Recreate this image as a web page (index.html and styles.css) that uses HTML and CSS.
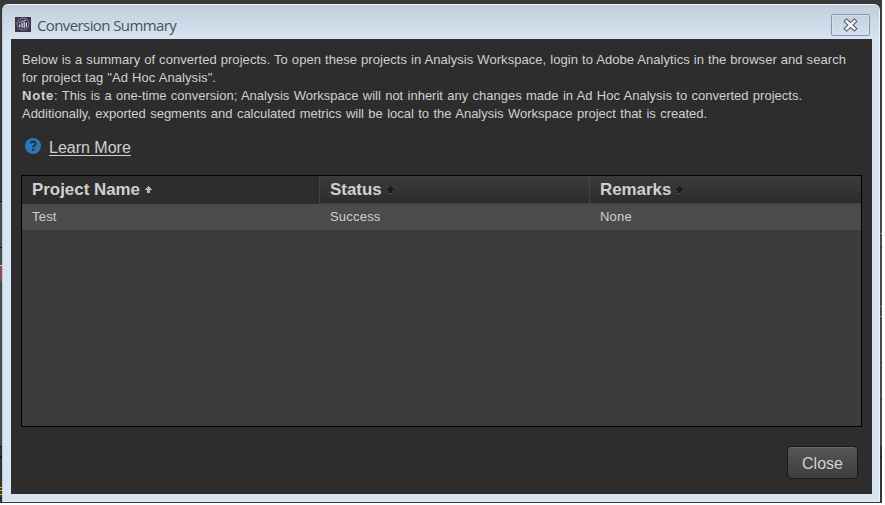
FILE: index.html
```html
<!DOCTYPE html>
<html lang="en">
<head>
<meta charset="utf-8">
<title>Conversion Summary</title>
<link rel="stylesheet" href="styles.css">
</head>
<body>
<div class="desktop">
  <i class="fleck l1"></i><i class="fleck l2"></i><i class="fleck l3"></i><i class="fleck l4"></i><i class="fleck l5"></i><i class="fleck gold g1"></i><i class="fleck gold g2"></i><i class="fleck gold g3"></i><i class="fleck red"></i>
  <i class="fleck r1"></i><i class="fleck r2"></i><i class="fleck r3"></i><i class="fleck r4"></i><i class="fleck pale p1"></i><i class="fleck pale p2"></i><i class="fleck pale p3"></i>
  <section class="window">
    <header class="titlebar">
      <svg class="app-icon" width="16" height="15" viewBox="0 0 16 15"><path fill="#3b3840" d="M0 0h16v15H0z"/><circle cx="8" cy="7" r="5.8" fill="#333138" stroke="#8067c4" stroke-width="1.2"/><path d="M4.7 10V7.3M7 11V5.8M9.2 11V4.8M11.4 10V5.4" stroke="#e5e2ed" stroke-width="1.2"/><path d="M4 6.3 6.5 4l2 .1L11 3" fill="none" stroke="#e5e2ed" stroke-width=".9"/></svg>
      <h1>Conversion Summary</h1>
      <button class="window-close" aria-label="Close window"><svg width="15" height="14" viewBox="0 0 15 14"><path d="m3.7 3.4 7.6 7.2M11.3 3.4l-7.6 7.2" stroke="#4c515c" stroke-width="4.6" stroke-linecap="square"/><path d="m3.7 3.4 7.6 7.2M11.3 3.4l-7.6 7.2" stroke="#f5f6f8" stroke-width="2.6" stroke-linecap="square"/></svg></button>
    </header>
    <main class="content">
      <p class="summary">
        <span class="line line-1">Below is a summary of converted projects. To open these projects in Analysis Workspace, login to Adobe Analytics in the browser and search</span>
        <span class="line line-2">for project tag "Ad Hoc Analysis".</span>
        <span class="line line-3"><b>Note</b>: This is a one-time conversion; Analysis Workspace will not inherit any changes made in Ad Hoc Analysis to converted projects.</span>
        <span class="line line-4">Additionally, exported segments and calculated metrics will be local to the Analysis Workspace project that is created.</span>
      </p>
      <div class="help">
        <svg width="16" height="16" viewBox="0 0 16 16"><circle cx="8" cy="8" r="8" fill="#2d78b4"/><path d="M5.8 5.3C6 3.2 10.7 3 10.7 5.7c0 1.8-2.5 1.7-2.5 3.7" fill="none" stroke="#282e34" stroke-width="1.9"/><path fill="#282e34" d="M7.1 10.8h2.1v2H7.1z"/></svg>
        <a>Learn More</a>
      </div>
      <div class="table">
        <div class="row head">
          <div class="cell sorted"><span>Project Name</span><svg class="arrow" width="7" height="8" viewBox="0 0 7 8"><path d="M3 0h1v1h1v1h1v1h1v1H5v3H2V4H0V3h1V2h1V1h1z"/></svg></div>
          <div class="cell"><span>Status</span><svg class="arrow" width="7" height="8" viewBox="0 0 7 8"><path d="M3 0h1v1h1v1h1v1h1v1H5v3H2V4H0V3h1V2h1V1h1z"/><path class="edge" d="M2 7h3v1H2z"/></svg></div>
          <div class="cell"><span>Remarks</span><svg class="arrow" width="7" height="8" viewBox="0 0 7 8"><path d="M3 0h1v1h1v1h1v1h1v1H5v3H2V4H0V3h1V2h1V1h1z"/><path class="edge" d="M2 7h3v1H2z"/></svg></div>
        </div>
        <div class="row item"><div class="cell">Test</div><div class="cell">Success</div><div class="cell">None</div></div>
      </div>
      <footer><button class="close">Close</button></footer>
    </main>
  </section>
</div>
</body>
</html>
```
FILE: styles.css
```css
* { box-sizing: border-box; }
body { margin: 0; width: 885px; height: 505px; overflow: hidden; background: #fff; font-family: "Liberation Sans", Arial, sans-serif; }
.desktop { position: relative; width: 882px; height: 503px; padding: 4px 2px 0; background: linear-gradient(#393939 0 200px, #4a4a4a 202px 445px, #333 447px); }
.window { width: 878px; height: 498px; border: 1px solid #edf3f8; border-left-color: #bccad6; border-radius: 6px 6px 0 0; padding: 0 7px 7px 8px; background: linear-gradient(#c1cfdc, #d7e5f2 35px); }
.titlebar { height: 34px; display: flex; align-items: center; padding: 5px 2px 0 4px; }
.app-icon { margin-top: -1px; }
.titlebar h1 { margin: 1px 0 0 6px; flex: 1; font: 15px/20px "Open Sans", "Noto Sans", sans-serif; color: #45525f; letter-spacing: -.6px; white-space: nowrap; }
.window-close { width: 39px; height: 22px; padding: 0; border: 1px solid #8795b0; border-radius: 2px; background: linear-gradient(#c5d1de, #d2dfec); box-shadow: inset 0 0 0 1px #d5e0ea; display: grid; place-items: center; }
.content { height: 455px; padding: 12px 10px 0; background: #2d2d2d; color: #d0d0d0; display: flex; flex-direction: column; }
.summary { margin: 0 0 0 1px; font-size: 13px; line-height: 18px; }
.line { display: block; height: 18px; text-align: justify; text-align-last: justify; }
.line-1 { width: 824px; letter-spacing: .06px; }
.line-2 { width: 194px; letter-spacing: .06px; }
.line-3 { width: 780px; }
.line-4 { width: 685px; letter-spacing: -.02px; }
.line b { letter-spacing: .8px; }
.help { margin: 15px 0 0 4px; height: 20px; display: flex; gap: 8px; font-size: 16px; line-height: 20px; }
.help a { text-decoration: underline; text-underline-offset: 2px; text-decoration-thickness: 1px; }
.table { margin-top: 17px; width: 841px; height: 252px; border: 1px solid #000; background: #3c3c3c; }
.row { display: grid; grid-template-columns: 297px 270px 1fr; }
.row .cell { padding-left: 11px; }
.row .cell:first-child { padding-left: 10px; }
.head { height: 28px; font-size: 16px; font-weight: bold; line-height: 27px; background: linear-gradient(#3b3b3b, #2c2c2c); }
.head .cell { display: flex; align-items: center; border-left: 1px solid #444; border-bottom: 1px solid #404040; }
.head .cell:first-child { border: 0; border-bottom: 1px solid #2d2d2d; }
.head .cell:not(:first-child) { padding-left: 10px; }
.head .sorted { background: #2d2d2d; }
.head span { font-size: 16.9px; }
.arrow { margin-left: 5px; fill: #181818; }
.sorted .arrow { fill: #b5b5b5; }
.arrow .edge { fill: #4e4e4e; }
.item { height: 26px; background: #4b4b4b; font-size: 13px; line-height: 25px; letter-spacing: .2px; }
footer { display: flex; justify-content: flex-end; margin-top: 19px; padding-right: 4px; }
.close { width: 71px; height: 33px; padding: 2px 0 0; border: 1px solid #191919; border-radius: 4px; background: linear-gradient(#565656, #3d3d3d); box-shadow: inset 0 1px #686868; font: 16px/29px "Liberation Sans", Arial, sans-serif; color: #d0d0d0; }
.fleck { position: absolute; left: 0; width: 2px; height: 1px; background: #111; }
.l1 { top: 201px; }
.l2 { top: 247px; }
.l3 { top: 446px; }
.l4 { top: 456px; height: 2px; }
.l5 { top: 498px; }
.gold { background: #f0a400; }
.g1 { top: 487px; }
.g2 { top: 490px; }
.g3 { top: 494px; }
.red { top: 265px; height: 16px; background: #8b4e4e; border-top: 1px solid #ccc; }
.r1, .r2, .r3, .r4, .pale { left: 881px; width: 1px; }
.r1 { top: 247px; }
.r2 { top: 362px; }
.r3 { top: 399px; }
.r4 { top: 456px; height: 2px; }
.pale { background: #ccc; }
.p1 { top: 233px; }
.p2 { top: 306px; }
.p3 { top: 316px; }
```
